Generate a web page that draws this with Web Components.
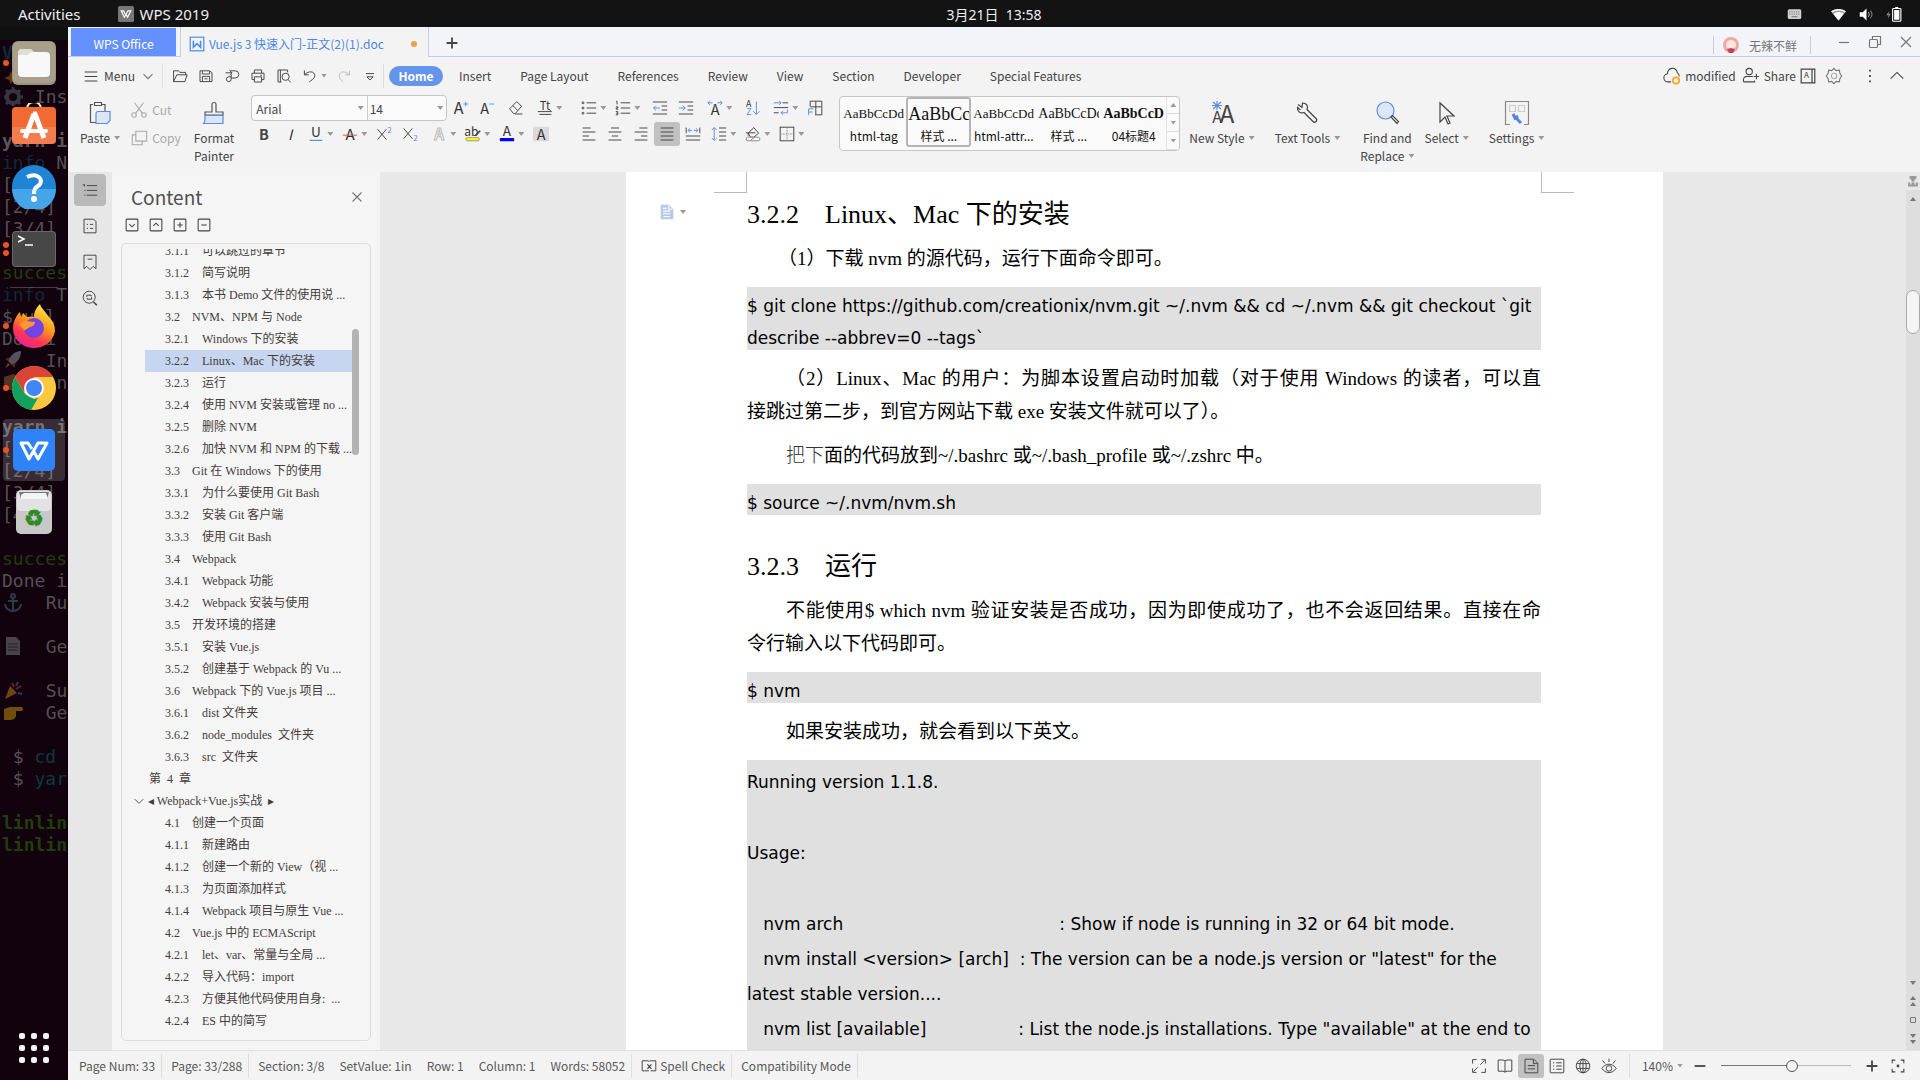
<!DOCTYPE html>
<html lang="en">
<head>
<meta charset="utf-8">
<title>WPS 2019</title>
<style>
html, body { margin: 0; height: 100%; }
body {
  font-family: "Noto Sans CJK SC", "Noto Sans", sans-serif;
  font-size: 12px;
  color: #444;
  overflow: hidden;
}
</style>
</head>
<body>
<desktop-shell></desktop-shell>
<script>
const A = (x, y, size, fill = "#333", extra = "") =>
  `<text x="${x}" y="${y}" font-size="${size}" fill="${fill}" stroke="none" text-anchor="middle" ${extra}>A</text>`;

// every icon sits on a 20 x 20 grid unless the box says otherwise
const icons = {
  menu: `<path d="M3 5.500h14M3 10.500h14M3 15.500h14"/>`,
  chevron: `<path stroke="#777" d="M5 8l5 5 5-5"/>`,
  fold: `<path stroke-width="1.500" d="M3 7l7 7 7-7"/>`,
  up: `<path d="M3 13l7-7 7 7"/>`,
  open: `<path d="M2 17V3.500h6l2 2h7v3M2 17l4-8.500h13L16 17z"/>`,
  save: `<path d="M2.500 3.500h12l3 2.500v11h-15zM5.500 4v3.500h9V4M5.500 17v-6.500h9V17M8 13.500h4"/>`,
  pdf: `<path d="M8 3.500h6a4.500 4.500 0 0 1 0 9H9M9 8v6a3 3 0 1 1-3-3h3M2 6h8M7 3l3 3-3 3"/>`,
  print: `<path d="M5.500 6.500v-4h9v4M5.500 14.500h-3v-8h15v8h-3M5.500 11h9v6.500h-9zM13 9h2"/>`,
  preview: `<path d="M7 17.500H2.500v-15h12v3M5.500 2.500v15"/><circle cx="12" cy="11" r="4.500"/><path d="M15 14.500l3.500 3.500"/>`,
  undo: `<path d="M3 3v5.500h5.500M3 8.500C8 3 16 4 16 9.500c0 4-5 6-7 8"/>`,
  redo: `<path stroke="#bbb" d="M17 3v5.500h-5.500M17 8.500C12 3 4 4 4 9.500c0 4 3 6 5 8"/>`,
  more: `<path d="M5 7h10M6 11h8l-4 4z"/>`,
  ruler: `<path fill="#999" stroke="none" d="M5 3h10v3l-3 3v2H8V9L5 6zM3 12h3v3h2v-3h4v3h2v-3h3v6H3z"/>`,
  scissors: `<path stroke="#aaa" d="M5 2l9 12M15 2L6 14"/><circle stroke="#aaa" cx="4.500" cy="15.500" r="2.500"/><circle stroke="#aaa" cx="15.500" cy="15.500" r="2.500"/>`,
  copy: `<path stroke="#aaa" d="M6.500 2.500h12v11h-12zM6 6.500H2.500v11h11V14"/>`,
  grow: A(7, 18, 20) + `<path stroke="#5a8fe0" d="M13 5h6M16 2v6"/>`,
  shrink: A(7, 18, 18) + `<path stroke="#5a8fe0" d="M13 5h6"/>`,
  eraser: `<path d="M2 11l9-9 6 6-8 9H7zM6 7l6 6M9 17.500h9"/>`,
  tt: `<text x="10" y="12" font-size="14" fill="#333" stroke="none" text-anchor="middle">Tt</text><path d="M1 14.500h17l-2-2M18 18H3"/>`,
  bullets: `<path d="M7 3.500h12M7 10h12M7 16.500h12"/><circle cx="2.500" cy="3.500" r="1.200"/><circle cx="2.500" cy="10" r="1.200"/><circle cx="2.500" cy="16.500" r="1.200"/>`,
  numbers: `<path d="M7 3.500h12M7 10h12M7 16.500h12M1.500 1.500h1V5.500M1 8.500h2.500v1.500H1.500v1.500h2.500M1 14.500h2.500v4H1M1.500 16.500h2"/>`,
  outdent: `<path d="M1 2.500h18M12 7.500h7M12 12.500h7M1 17.500h18"/><path stroke="#5a8fe0" d="M10 10H2l3-3M2 10l3 3"/>`,
  indent: `<path d="M1 2.500h18M12 7.500h7M12 12.500h7M1 17.500h18"/><path stroke="#5a8fe0" d="M1 10h8L6 7M9 10l-3 3"/>`,
  scale: A(10, 19, 18) + `<path stroke="#5a8fe0" d="M7 3.500H1l2.500-2.500M1 3.500L3.500 6M13 3.500h6L16.500 1M19 3.500L16.500 6"/>`,
  sort: A(6, 9, 11) + `<text x="6" y="19" font-size="11" fill="#5a8fe0" stroke="none" text-anchor="middle">Z</text><path stroke="#5a8fe0" d="M15.500 2v16l-4-4M15.500 18l4-4"/>`,
  wrap: `<path d="M12 3.500h7M1 9.500h18M1 16h6"/><path stroke="#5a8fe0" d="M1 3.500h9L7.500 1M10 3.500L7.500 6M18 12v4h-8l2.500-2.500M10 16l2.500 2.500"/>`,
  frame: `<path d="M4 8V1.500h14.500v17H10M11 2v16M4 8.500h14"/><path stroke="#5a8fe0" d="M2 19v-8h6M2 15h5"/>`,
  bold: `<text x="10" y="17" font-size="18" font-weight="bold" fill="#444" stroke="none" text-anchor="middle">B</text>`,
  italic: `<text x="10" y="17" font-size="18" font-style="italic" fill="#333" stroke="none" text-anchor="middle">I</text>`,
  underline: `<text x="10" y="14" font-size="17" fill="#333" stroke="none" text-anchor="middle">U</text><path stroke="#5a8fe0" stroke-width="1.500" d="M2 18h16"/>`,
  strike: A(10, 17, 19) + `<path stroke="#d9534f" d="M1 11.500h18"/>`,
  sup: `<path d="M2 4l11 13M13 4L2 17"/><text x="17" y="9" font-size="10" fill="#5a8fe0" stroke="none" text-anchor="middle">2</text>`,
  sub: `<path d="M2 3l11 13M13 3L2 16"/><text x="17" y="19" font-size="10" fill="#5a8fe0" stroke="none" text-anchor="middle">2</text>`,
  outlineA: `<text x="10" y="17" font-size="19" fill="#f3f3f3" stroke="#bbb" text-anchor="middle" font-weight="bold">A</text>`,
  highlight: `<text x="8" y="12" font-size="15" fill="#333" stroke="none" text-anchor="middle">ab</text><path d="M13 12l6-6" stroke-width="2"/><rect x="1" y="14.500" width="17" height="4" rx="2" fill="#ff0" stroke="#999"/>`,
  fontcolor: A(10, 13, 17) + `<rect x="1" y="15" width="18" height="4" rx="1" fill="#00f" stroke="none"/>`,
  shade: `<rect y="1" width="20" height="18" rx="1" fill="#dadada" stroke="none"/>` + A(10, 17, 18),
  left: `<path d="M2 2.500h10M2 7.500h16M2 12.500h8M2 17.500h16"/>`,
  center: `<path d="M5 2.500h10M2 7.500h16M6 12.500h8M2 17.500h16"/>`,
  right: `<path d="M8 2.500h10M2 7.500h16M10 12.500h8M2 17.500h16"/>`,
  justify: `<path d="M2 2.500h16M2 7.500h16M2 12.500h16M2 17.500h16"/>`,
  distribute: `<path d="M1.500 2v7M18.500 2v7M1 12.500h18M1 17.500h18"/><path stroke="#5a8fe0" d="M9 5.500H4l2-2.500M4 5.500L6 8M11 5.500h5L14 3M16 5.500L14 8"/>`,
  spacing: `<path d="M10 2.500h9M10 7.500h9M10 12.500h9M10 17.500h9"/><path stroke="#5a8fe0" d="M4 2v16M1 5l3-3 3 3M1 15l3 3 3-3"/>`,
  bucket: `<path d="M4 9l7-7 6 7-6 5H7zM1 8.500h12M4 9v3"/><rect x="1.500" y="14" width="17" height="4.500" rx="2" fill="#fff" stroke="#888"/><path stroke="#d9534f" d="M7 18l5-4"/>`,
  border: `<rect x="1.500" y="1.500" width="17" height="17"/><path stroke="#999" stroke-dasharray="2 1" d="M10 2v16M2 10h16"/>`,
  list: `<path d="M6 4.500h13M6 10.500h13M6 16.500h13M1 3.500h2.500M3 3.500v2M3 10.500h1.500M3 16.500h1.500"/>`,
  sheet: `<path d="M2.500 1.500h12l3 3v14h-15zM10 8h4M6 8h1.500M6 13h1.500M10 13h4"/>`,
  bookmark: `<path d="M2.500 18.500v-17h15v17l-3.500-3-4 4-4-4zM7 6.500h6"/>`,
  find: `<circle cx="9" cy="9" r="7.500"/><path stroke-width="2" d="M14.500 15l4 4"/><path d="M6 9V6.500h5.500V8M12 9v2.500H6.500V10"/>`,
  boxdown: `<rect x="3.500" y="3.500" width="13" height="13" rx="1"/><path d="M7 9l3 3 3-3"/>`,
  boxup: `<rect x="3.500" y="3.500" width="13" height="13" rx="1"/><path d="M7 11l3-3 3 3"/>`,
  boxplus: `<rect x="3.500" y="3.500" width="13" height="13" rx="1"/><path d="M7 10h6M10 7v6"/>`,
  boxminus: `<rect x="3.500" y="3.500" width="13" height="13" rx="1"/><path d="M7 10h6"/>`,
  close: `<path stroke="#777" d="M5 5l10 10M15 5L5 15"/>`,
  minimize: `<path stroke="#777" d="M5 10.500h10"/>`,
  restore: `<g stroke="#777"><rect x="4.500" y="7.500" width="8" height="8" rx="1"/><path d="M7.500 7V4.500h8v8H13"/></g>`,
  plus: `<path stroke-width="2" d="M10 4v12M4 10h12"/>`,
  minus: `<path stroke-width="2" d="M4 10h12"/>`,
  cloud: `<path d="M9 16.500H6a4.500 4.500 0 0 1-1-9 5.500 5.500 0 0 1 11-1 4.500 4.500 0 0 1 2 4"/><circle cx="14.500" cy="15" r="3.500" stroke="#f5a623" stroke-width="2"/>`,
  share: `<circle cx="8" cy="5" r="3.500"/><path d="M12 10.500H6a4 4 0 0 0-4 6h12V15M13 10.500h6M16 7.500v6"/>`,
  ai: `<path stroke-width="1.500" d="M1.500 1.500h17v17h-17zM15 2v16"/>` + A(8, 13, 10),
  gear: `<path stroke="#777" d="M10 1.500l2.500 2.500 3.500-.5.500 3.500 2 3-2 3-.5 3.500-3.500-.5-2.500 2.500L7.500 16l-3.500.5L3.500 13l-2-3 2-3L4 3.500l3.500.5z"/><circle cx="10" cy="10" r="3" stroke="#aaa"/>`,
  dots: `<path stroke-width="2" d="M10 3v2M10 9v2M10 15v2"/>`,
  full: `<path d="M7 2H2v5M13 2h5v5M2 13v5h5M18 13v5h-5M11.500 8.500L17 3M8.500 11.500L3 17"/>`,
  book: `<path d="M10 4v14M1.500 2.500h6l2.500 1 2.500-1h6v14h-6l-2.500 1-2.500-1h-6z"/>`,
  page: `<path d="M2.500 1.500h11l5 5v12h-16zM6 9.500h9M6 13.500h9M13 2v5h5"/>`,
  outline: `<rect x="1.500" y="1.500" width="17" height="17" rx="1"/><path d="M5 6h1.500M9 6h7M5 10h1.500M9 10h7M5 14h1.500M9 14h7"/>`,
  globe: `<circle cx="10" cy="10" r="8.500"/><ellipse cx="10" cy="10" rx="4" ry="8.500"/><path d="M10 2v16M2.500 7h15M2.500 13h15"/>`,
  eye: `<path d="M1 13c5-7 13-7 18 0-5 7-13 7-18 0zM10 1v4M2 3l3 4M18 3l-3 4"/><circle cx="10" cy="13" r="3.500"/>`,
  spell: `<path d="M10 16H1.500V3.500H9l1 1 1-1h7.500V16H12"/><path stroke-width="1.500" d="M8 8l5 5.500M13 8l-5 5.500"/>`,
  fit: `<path d="M7 3.500H3.500V7M13 3.500h3.500V7M3.500 13v3.500H7M16.500 13v3.500H13"/><circle cx="10" cy="10" r="1" fill="#444"/>`,
  docmark: `<path fill="#b7c9ea" stroke="none" d="M3 2h9l5 5v11H3z"/><path stroke="#fff" d="M5.500 6h4M5.500 9h8M5.500 12h8M6 15h7M12 3v4h4"/>`,
  wlogo: `<rect x="1.500" y="1.500" width="17" height="17" fill="none" stroke="#4a8df0" stroke-width="1.500"/><path stroke="#4a8df0" stroke-width="2" d="M5.500 6v8l4.500-4.500 4.500 4.500V6"/>`,
  wgrey: `<rect width="20" height="20" rx="2" fill="#777" stroke="none"/><path stroke="#fff" stroke-width="1.500" d="M9 10L7 6H4l4 8 4.500-8H16l-4 8-2-4"/>`,
  keyboard: `<rect x="1" y="3" width="18" height="13" rx="2" fill="#d0d0d0" stroke="none"/><path stroke="#666" stroke-dasharray="1.500 1.500" d="M3 6.500h14M3 9.500h14"/><path stroke="#666" d="M6 13h8"/>`,
  wifi: `<path fill="#999" stroke="none" d="M10 18L0 6c6-4.500 14-4.500 20 0z"/><path fill="#fff" stroke="none" d="M10 18L3 9c4-3 10-3 14 0z"/><path stroke="#fff" stroke-width="2" d="M1 6.500c5-4 13-4 18 0"/>`,
  sound: `<path fill="#fff" stroke="none" d="M1 7h4l5-5v16l-5-5H1z"/><path stroke="#ddd" d="M12.500 7c1.500 2 1.500 4 0 6"/><path stroke="#777" stroke-width="1.500" d="M15 5c3 3 3 7 0 10"/>`,
  battery: `<path fill="#888" stroke="none" d="M3 5L-1 11h3l-1 5 4-7H2z"/><rect x="7.500" y="2" width="11" height="17" rx="1" stroke="#fff" stroke-width="1.500"/><path fill="#fff" stroke="none" d="M11 0h4v2h-4zM9.500 4h7v13h-7z"/>`,
  paste: `<path stroke="#555" d="M5 3.500H2.500v18H9M14 3.500h3V10"/><path stroke="#555" d="M6.500 1.500h7v3h-7z"/><path fill="#dde6f7" stroke="#5a8fe0" d="M8 12.500q0-2 2-2h12v9l-3 3H8z"/>`,
  painter: `<path stroke="#555" d="M10 11V3q0-1.500 2-1.500t2 1.500v8h7v3H3v-3z"/><path fill="#dde6f7" stroke="#5a8fe0" d="M3 14.500h18v8H1.500q1.500-2 1.500-4z"/>`,
  newstyle: `<text x="7" y="22" font-size="16" fill="#444" stroke="none" text-anchor="middle">A</text><text x="17" y="22" font-size="24" fill="#444" stroke="none" text-anchor="middle">A</text><path stroke="#5a8fe0" d="M7 0v9M3 1l8 7M11 1L3 8M2 4.500h10"/>`,
  wrench: `<path d="M3 3.500l4 3 .5-4.500c4 0 6 3 4.500 6.500l9 9c2 2-1 5-3 3l-9-9C5 13 2 10 2.500 6.500l3 2.500"/>`,
  magnify: `<circle cx="10.500" cy="9.500" r="8.500" fill="#dde6f7" stroke="#5a8fe0"/><path d="M16 16l1.500-1.500 6 6-1.500 2z"/>`,
  cursor: `<path d="M5 2v19l5-5 3 7 2-1-3-7h7z"/>`,
  settings: `<path stroke="#888" d="M5 23.500H.5V.5h23v23H19"/><path stroke="#ccc" d="M4.500 4.500h6v6h-6zM13.500 4.500h6v6h-6z"/><path stroke="#4f87dd" stroke-width="3" d="M10 16l6 6M8 13l2 4 3-2"/>`
};

function define(tag, html, setup) {
  const template = document.createElement("template");
  template.innerHTML = html;
  customElements.define(tag, class extends HTMLElement {
    constructor() {
      super();
      this.attachShadow({ mode: "open" });
      this.shadowRoot.append(template.content.cloneNode(true));
    }
    connectedCallback() {
      if (setup) setup(this, this.shadowRoot);
    }
  });
}

const reset = `
  :host, *{ box-sizing: border-box; }
  button{ font: inherit; color: inherit; background: none; border: 0; padding: 0; }
  a{ color: inherit; text-decoration: none; }
`;

define("wps-icon", `
<style>
:host{ display: block; flex: none; width: 18px; height: 18px; }
svg{ display: block; width: 100%; height: 100%; overflow: visible; }
</style>
<svg fill="none" stroke="#444" stroke-width="1.200" aria-hidden="true"></svg>`, (el, root) => {
  const svg = root.querySelector("svg");
  svg.setAttribute("viewBox", `0 0 ${el.getAttribute("grid") || "20 20"}`);
  svg.innerHTML = icons[el.getAttribute("name")];
});

define("drop-caret", `
<style>
:host{ display: block; flex: none; width: 6px; height: 4px; background: #999; clip-path: polygon(0 0, 100% 0, 50% 100%); }
:host([up]){ clip-path: polygon(50% 0, 100% 100%, 0 100%); }
</style>`);

// small toolbar button, with an optional drop-down arrow
define("tool-button", `
<style>${reset}
:host{ display: block; flex: none; width: 26px; }
:host([caret]){ width: 34px; }
:host([apart]){ margin-left: 3px; }
button{ display: flex; align-items: center; gap: 3px; width: 26px; height: 24px; padding-left: 5px; border-radius: 3px; }
:host([on]) button{ background: #c1c1c1; }
wps-icon{ width: 16px; height: 16px; }
drop-caret{ display: none; }
:host([caret]) drop-caret{ display: block; }
</style>
<button type="button"><wps-icon></wps-icon><drop-caret></drop-caret></button>`, (el, root) => {
  root.querySelector("button").setAttribute("aria-label", el.getAttribute("icon"));
  const icon = document.createElement("wps-icon");
  icon.setAttribute("name", el.getAttribute("icon"));
  root.querySelector("wps-icon").replaceWith(icon);
});

// large ribbon button: picture above, caption below
define("big-tool", `
<style>${reset}
:host{ display: block; flex: none; }
button{ display: flex; flex-direction: column; align-items: center; gap: 4px; line-height: 18px; white-space: nowrap; }
::slotted(wps-icon){ width: 24px; height: 24px; }
drop-caret{ display: inline-block; margin-left: 4px; vertical-align: 3px; }
:host([plain]) drop-caret{ display: none; }
</style>
<button type="button"><slot name="icon"></slot><span><slot></slot><drop-caret></drop-caret></span></button>`);

define("top-bar", `
<style>
:host{
  display: grid;
  grid-template-columns: 1fr auto 1fr;
  align-items: center;
  height: 27px;
  padding: 0 18px;
  background: #131313;
  color: #eee;
  font: 15px/26px "Noto Sans", "Noto Sans CJK SC", sans-serif;
}
div{ display: flex; align-items: center; }
.left{ gap: 37px; }
.app{ gap: 6px; }
.clock{ padding: 2px 0 0 68px; font-size: 14px; }
.right{ justify-content: flex-end; gap: 13px; }
wps-icon{ width: 15px; height: 15px; }
.keys{ margin-right: 16px; }
.app wps-icon{ width: 16px; height: 16px; }
</style>
<div class="left"><span>Activities</span><div class="app"><wps-icon name="wgrey"></wps-icon><span>WPS 2019</span></div></div>
<div class="clock">3月21日&nbsp; 13:58</div>
<div class="right"><wps-icon class="keys" name="keyboard"></wps-icon><wps-icon name="wifi"></wps-icon><wps-icon name="sound"></wps-icon><wps-icon name="battery"></wps-icon></div>`);

// the console window that shows through the translucent dock
define("term-backdrop", `
<style>
:host{ display: block; overflow: hidden; background: #12020d; border-top: 13px solid #101010; }
pre{ margin: 0; padding: 2px 0 0 2px; font: 18px/22px "DejaVu Sans Mono", monospace; color: #555053; }
.info{ color: #10293a; }
.ok{ color: #203f0b; }
.cmd{ color: #0b3b40; }
b{ color: #5c575a; }
svg{ display: inline-block; width: 22px; height: 20px; vertical-align: top; opacity: .45; }
</style>
<pre><b class="info">V  L</b>
<svg viewBox="0 0 20 20"><path fill="#b07c10" d="M8 7l2 5 5 2-5 2-2 4-2-4-5-2 5-2z"/></svg>  r
<svg viewBox="0 0 20 20"><circle cx="10" cy="11" r="6" fill="none" stroke="#5f7885" stroke-width="4"/><path stroke="#5f7885" stroke-width="3" d="M10 1v4M10 17v3M1 11h3M16 11h4M3 4l3 3M14 15l3 3M17 4l-3 3M6 15l-3 3"/></svg> Ins

<b>yarn i</b>
<span class="info">info</span> N
[
[2/4]
[3/4]

<span class="ok">succes</span>
<span class="info">info</span> T
$ url
Do  i
<svg viewBox="0 0 20 20"><path fill="#a9b3ba" d="M18 1c-6 0-10 4-13 10l4 4c6-3 9-8 9-14z"/><path fill="#d03b2f" d="M7 7L2 9l3 2zM13 13l-2 5-2-3z"/><path fill="#f0922b" d="M5 13l-3 5 5-3z"/></svg>  In
<svg viewBox="0 0 20 20"><path fill="#a5713d" d="M1 5l9-3 9 3v11l-9 3-9-3z"/></svg>   n

<b>yarn i</b>
[
[2/4]
[3/4]
[4

<span class="ok">succes</span>
Done i
<svg viewBox="0 0 20 20"><g fill="none" stroke="#4b8599" stroke-width="2"><circle cx="10" cy="4" r="2"/><path d="M10 6v13M5 9h10M2 12c0 4 4 7 8 7s8-3 8-7"/></g></svg>  Ru

<svg viewBox="0 0 20 20"><path fill="#8a9296" d="M3 1h10l4 4v14H3z"/><path stroke="#444" d="M5 8h10M5 11h10M5 14h10"/></svg>  Ge

<svg viewBox="0 0 20 20"><path fill="#d99a25" d="M2 19L7 6l7 7z"/><path stroke="#d8434e" stroke-width="2" d="M9 3l2 4M13 9l5-3"/><path stroke="#3880cc" stroke-width="2" d="M15 2l-2 4M15 13l4 1"/></svg>  Su
<svg viewBox="0 0 20 20"><path fill="#e3a90b" d="M1 7l6-2h12q2 2 0 4h-6v5q-1 4-6 4H1z"/></svg>  Ge

 $ <span class="cmd">cd</span>
 $ <span class="cmd">yar</span>

<b class="ok">linlin</b>
<b class="ok">linlin</b></pre>`);

define("app-dock", `
<style>${reset}
:host{ display: flex; flex-direction: column; padding: 5px 0 17px; }
button{ display: flex; align-items: center; height: 62px; width: 68px; padding-left: 3px; gap: 3px; }
.run{ flex: none; display: flex; flex-direction: column; gap: 2px; width: 6px; }
.run i{ width: 6px; height: 6px; border-radius: 50%; background: #e95420; }
svg{ display: block; width: 44px; height: 44px; }
.active{ width: 62px; margin-left: 3px; padding-left: 0; border-radius: 4px; background: #ffffff2b; }
hr{ width: 48px; margin: 7px 0 7px 10px; border: 0; border-top: 1px solid #ffffff3a; }
.apps{ margin-top: auto; height: 30px; padding-left: 19px; }
.apps svg{ width: 30px; height: 30px; }
</style>
<button type="button" aria-label="Files"><span class="run"><i></i></span><svg viewBox="0 0 44 44"><rect width="44" height="44" rx="6" fill="#9c947f"/><rect x="1" y="1" width="42" height="41" rx="5" fill="#a8a08d"/><path fill="#e0ddd3" d="M6 12q0-4 4-4h8l4 4v6H6z"/><rect x="6" y="11" width="32" height="25" rx="4" fill="#f8f8f8"/><path fill="#e0ddd3" d="M6 14q0-6 4-6h8q2 0 3 2l1 1q-4 0-6 3z"/></svg></button>
<button type="button" aria-label="Software"><span class="run"></span><svg viewBox="0 0 44 44"><path d="M15 7q0-8 7-8t7 8" fill="none" stroke="#f2e3c8" stroke-width="2"/><rect y="4" width="44" height="37" rx="4" fill="#f26a33"/><path fill="#ffffff22" d="M0 24h44v13q0 4-4 4H4q-4 0-4-4z"/><path fill="none" stroke="#fff" stroke-width="5" d="M21 11h2l9 24M22 11l-9 24"/><path stroke="#fff" stroke-width="4" stroke-linecap="round" d="M10 28h24"/></svg></button>
<button type="button" aria-label="Help"><span class="run"></span><svg viewBox="0 0 44 44"><circle cx="22" cy="22" r="22" fill="#1f84d6"/><path fill="#45a5e8" d="M0 24h44a22 22 0 0 1-44 0z"/><path fill="none" stroke="#fff" stroke-width="4" d="M15 12q6-3 10-1c6 3 4 8 1 10-3 2-4 3-4 8"/><circle cx="22" cy="34" r="3" fill="#fff"/></svg></button>
<button type="button" aria-label="Terminal"><span class="run"><i></i><i></i></span><svg viewBox="0 0 44 44"><rect y="4" width="44" height="36" rx="4" fill="#6a6a6a"/><rect x="1" y="5" width="42" height="34" rx="3" fill="#474747"/><path fill="none" stroke="#fff" stroke-width="1.500" d="M6 9l6 3-6 3M13 18h8"/></svg></button>
<hr>
<button type="button" aria-label="Firefox"><span class="run"><i></i></span><svg viewBox="0 0 44 44"><defs><linearGradient id="fox" x1=".8" y1="0" x2=".3" y2="1"><stop stop-color="#fff04a"/><stop offset=".45" stop-color="#ff9a1f"/><stop offset=".75" stop-color="#ff3750"/><stop offset="1" stop-color="#e3209a"/></linearGradient></defs><path fill="url(#fox)" d="M28 0c1 4 5 7 9 13q6 6 6 14c-2 11-11 17-21 17C10 44 1 35 1 24c0-6 3-12 7-16l1 5 2-4 4 4q5-1 7 0c0-6 3-10 6-13z"/><circle cx="22" cy="24" r="10" fill="#7542e5"/><path fill="#ff9a2a" d="M7 20l7-3 9 1q0 4-5 5c-3 1-3 3-6 3z"/></svg></button>
<button type="button" aria-label="Chrome"><span class="run"><i></i></span><svg viewBox="0 0 44 44"><circle cx="22" cy="22" r="22" fill="#fbc941"/><path fill="#db4437" d="M3 11a22 22 0 0 1 38 0H22L12 26z"/><path fill="#12a05c" d="M3 11l10 17 9 5 4-1-7 12A22 22 0 0 1 3 11z"/><circle cx="22" cy="22" r="10" fill="#fff"/><circle cx="22" cy="22" r="8" fill="#4285f4"/></svg></button>
<button type="button" class="active" aria-label="WPS"><span class="run"><i></i></span><svg viewBox="0 0 44 44"><rect x="1" y="1" width="42" height="42" rx="5" fill="#2d83f7"/><path fill="none" stroke="#fff" stroke-width="3" stroke-linejoin="round" d="M20 21l-4-6H9l8 16 9-16h9l-9 16-5-9"/></svg></button>
<button type="button" aria-label="Trash"><span class="run"></span><svg viewBox="0 0 44 44"><rect x="4" width="36" height="44" rx="5" fill="#c8c8c8"/><rect x="5" y="1" width="34" height="20" rx="4" fill="#e2e2e2"/><path fill="#777" d="M7 2h30l-2 7H9z"/><path fill="#f4f4f4" d="M9 5l3-2h22l2 6H9z"/><text x="22" y="36" font-family="DejaVu Sans" font-size="22" fill="#2d8a25" stroke="#2d8a25" text-anchor="middle">♻</text></svg></button>
<button type="button" class="apps" aria-label="Show Applications"><svg viewBox="0 0 30 30" fill="#f2f2f2"><rect width="6" height="6" rx="2"/><rect x="12" width="6" height="6" rx="2"/><rect x="24" width="6" height="6" rx="2"/><rect y="12" width="6" height="6" rx="2"/><rect x="12" y="12" width="6" height="6" rx="2"/><rect x="24" y="12" width="6" height="6" rx="2"/><rect y="24" width="6" height="6" rx="2"/><rect x="12" y="24" width="6" height="6" rx="2"/><rect x="24" y="24" width="6" height="6" rx="2"/></svg></button>`);

define("tab-strip", `
<style>${reset}
:host{ display: flex; align-items: stretch; height: 30px; padding-left: 3px; background: #f2f4f9; box-shadow: inset 0 -1px #c8cee2; }
.home{ width: 105px; margin: 1px 4px 1px 0; padding-top: 3px; background: #6491fe; color: #fff; }
.doc{ display: flex; align-items: center; width: 249px; padding: 3px 11px 0 8px; border: solid #c8cee2; border-width: 0 1px; background: #f3f3f3; color: #4a86e8; white-space: nowrap; }
.doc wps-icon{ width: 16px; height: 16px; margin-right: 4px; }
.dot{ width: 6px; height: 6px; margin-left: auto; border-radius: 50%; background: #e9a04b; }
.add{ padding: 2px 14px 0; }
.user{ display: flex; align-items: center; gap: 10px; height: 18px; margin: 9px 23px 0 auto; padding: 0 13px 0 9px; border: solid #ccc; border-width: 0 1px; color: #777; }
.user svg{ width: 16px; height: 16px; }
.win{ display: flex; align-items: center; gap: 11px; padding: 0 4px 0 0; }
.win wps-icon{ width: 20px; height: 20px; }
</style>
<button type="button" class="home">WPS Office</button>
<div class="doc"><wps-icon name="wlogo"></wps-icon><span>Vue.js 3 快速入门-正文(2)(1).doc</span><span class="dot"></span></div>
<button type="button" class="add" aria-label="New tab"><wps-icon name="plus"></wps-icon></button>
<div class="user"><svg viewBox="0 0 16 16"><circle cx="8" cy="8" r="8" fill="#efa9a0"/><circle cx="8" cy="8" r="5" fill="#fbe6e0"/><path fill="#c2425c" d="M4 12l4-1 4 1-2 4H6z"/></svg><span>无辣不鲜</span></div>
<div class="win"><button type="button" aria-label="Minimize"><wps-icon name="minimize"></wps-icon></button><button type="button" aria-label="Restore"><wps-icon name="restore"></wps-icon></button><button type="button" aria-label="Close"><wps-icon name="close"></wps-icon></button></div>`);

define("menu-row", `
<style>${reset}
:host{ display: flex; align-items: center; height: 38px; padding: 0 14px 1px; }
.menu{ display: flex; align-items: center; gap: 4px; padding-right: 5px; }
.quick{ display: flex; align-items: center; height: 24px; padding: 0 0 0 4px; border: solid #ddd; border-width: 0 1px; }
.home{ width: 54px; height: 20px; margin: 0 16px 0 5px; border-radius: 10px; background: #6595ea; color: #fff; font-weight: bold; line-height: 20px; }
nav{ display: flex; gap: 29px; }
.right{ display: flex; align-items: center; gap: 4px; margin-left: auto; }
.right .share{ margin-left: 2px; }
.right .ai{ width: 16px; height: 16px; }
.right .gear{ margin-left: 5px; }
.right .dots{ margin: 0 5px 0 14px; }
</style>
<button type="button" class="menu"><wps-icon name="menu"></wps-icon><span>Menu</span><wps-icon name="chevron"></wps-icon></button>
<div class="quick">
  <tool-button icon="open"></tool-button><tool-button icon="save"></tool-button><tool-button icon="pdf"></tool-button><tool-button icon="print"></tool-button><tool-button icon="preview"></tool-button><tool-button icon="undo" caret></tool-button><tool-button icon="redo"></tool-button><tool-button icon="more"></tool-button>
</div>
<button type="button" class="home">Home</button>
<nav><a href="#">Insert</a><a href="#">Page Layout</a><a href="#">References</a><a href="#">Review</a><a href="#">View</a><a href="#">Section</a><a href="#">Developer</a><a href="#">Special Features</a></nav>
<div class="right"><wps-icon name="cloud"></wps-icon><span>modified</span><wps-icon class="share" name="share"></wps-icon><span>Share</span><wps-icon class="ai" name="ai"></wps-icon><wps-icon class="gear" name="gear"></wps-icon><wps-icon class="dots" name="dots"></wps-icon><wps-icon name="up"></wps-icon></div>`);

define("style-card", `
<style>
:host{ display: block; width: 65px; height: 50px; padding: 0 2px; overflow: hidden; box-sizing: border-box; color: #111; white-space: nowrap; border: 2px solid transparent; border-width: 2px 0; }
:host([on]){ border: 2px solid #b5b5b5; border-radius: 3px; padding: 0; }
.sample{ height: 28px; overflow: hidden; font: var(--sample, 13px)/30px "Liberation Serif", serif; }
:host([heavy]) .sample{ font-weight: bold; }
.name{ line-height: 18px; text-align: center; }
</style>
<div class="sample">AaBbCcDd</div><div class="name"><slot></slot></div>`);

define("wps-ribbon", `
<style>${reset}
:host{ display: flex; align-items: flex-start; height: 77px; padding: 0 12px; }
.clip{ display: grid; gap: 10px; padding: 6px 13px 0 10px; color: #aaa; }
.clip button{ display: flex; align-items: center; gap: 4px; line-height: 18px; }
.fonts{ padding-left: 17px; }
.row{ display: flex; align-items: center; height: 26px; }
.combo{ display: flex; align-items: center; width: 196px; height: 26px; border: 1px solid #c6c6c6; border-radius: 4px; background: #fafafa; margin-right: 1px; }
.combo select{ appearance: none; border: 0; background: none; font: inherit; color: inherit; width: 115px; padding: 0 4px; height: 24px; }
.combo .size{ width: 80px; border-left: 1px solid #ccc; padding-left: 2px; }
.combo drop-caret{ margin: 0 3px 0 -9px; }
.paras{ padding-left: 10px; }
.gallery{ display: flex; height: 55px; margin: 1px 9px 0 11px; padding-left: 1px; border: 1px solid #c6c6c6; border-radius: 4px; background: #fafafa; }
.pager{ display: grid; grid-template-rows: 17px 18px 18px; width: 13px; border-left: 1px solid #e4e4e4; place-items: center; }
.pager button{ display: grid; place-items: center; width: 12px; height: 100%; border-bottom: 1px solid #ddd; }
.big{ margin-top: 6px; }
.tools{ display: flex; align-items: flex-start; gap: 20px; padding-top: 6px; }
.near{ margin-left: -10px; }
</style>
<big-tool class="big"><wps-icon slot="icon" name="paste" grid="24 24"></wps-icon>Paste</big-tool>
<div class="clip"><button type="button"><wps-icon name="scissors"></wps-icon>Cut</button><button type="button"><wps-icon name="copy"></wps-icon>Copy</button></div>
<big-tool class="big" plain><wps-icon slot="icon" name="painter" grid="24 24"></wps-icon>Format<br>Painter</big-tool>
<div class="fonts">
  <div class="row">
    <div class="combo"><select aria-label="Font"><option>Arial</option></select><drop-caret></drop-caret><select class="size" aria-label="Font size"><option>14</option></select><drop-caret></drop-caret></div>
    <tool-button icon="grow"></tool-button><tool-button icon="shrink"></tool-button><tool-button icon="eraser" apart></tool-button><tool-button icon="tt" caret apart></tool-button>
  </div>
  <div class="row">
    <tool-button icon="bold"></tool-button><tool-button icon="italic"></tool-button><tool-button icon="underline" caret></tool-button><tool-button icon="strike" caret></tool-button><tool-button icon="sup"></tool-button><tool-button icon="sub"></tool-button><tool-button icon="outlineA" caret apart></tool-button><tool-button icon="highlight" caret></tool-button><tool-button icon="fontcolor" caret></tool-button><tool-button icon="shade"></tool-button>
  </div>
</div>
<div class="paras">
  <div class="row">
    <tool-button icon="bullets" caret></tool-button><tool-button icon="numbers" caret></tool-button><tool-button icon="outdent" apart></tool-button><tool-button icon="indent"></tool-button><tool-button icon="scale" caret apart></tool-button><tool-button icon="sort" apart></tool-button><tool-button icon="wrap" caret apart></tool-button><tool-button icon="frame"></tool-button>
  </div>
  <div class="row">
    <tool-button icon="left"></tool-button><tool-button icon="center"></tool-button><tool-button icon="right"></tool-button><tool-button icon="justify" on></tool-button><tool-button icon="distribute"></tool-button><tool-button icon="spacing" caret></tool-button><tool-button icon="bucket" caret></tool-button><tool-button icon="border" caret></tool-button>
  </div>
</div>
<div class="gallery">
  <style-card>html-tag</style-card><style-card on style="--sample: 18px">样式 ...</style-card><style-card>html-attr...</style-card><style-card style="--sample: 14px">样式 ...</style-card><style-card heavy style="--sample: 14px">04标题4</style-card>
  <div class="pager"><button type="button" aria-label="Previous"><drop-caret up></drop-caret></button><button type="button" aria-label="Next"><drop-caret></drop-caret></button><button type="button" aria-label="More"><drop-caret></drop-caret></button></div>
</div>
<div class="tools">
  <big-tool><wps-icon slot="icon" name="newstyle" grid="24 24"></wps-icon>New Style</big-tool>
  <big-tool><wps-icon slot="icon" name="wrench" grid="24 24"></wps-icon>Text Tools</big-tool>
  <big-tool><wps-icon slot="icon" name="magnify" grid="24 24"></wps-icon>Find and<br>Replace</big-tool>
  <big-tool class="near"><wps-icon slot="icon" name="cursor" grid="24 24"></wps-icon>Select</big-tool>
  <big-tool><wps-icon slot="icon" name="settings" grid="24 24"></wps-icon>Settings</big-tool>
</div>`);

define("side-strip", `
<style>${reset}
:host{ display: flex; flex-direction: column; align-items: center; gap: 4px; flex: none; width: 44px; padding-top: 2px; background: #e7e7e7; }
button{ display: grid; place-items: center; width: 32px; height: 32px; border-radius: 4px; }
wps-icon{ width: 16px; height: 16px; }
.on{ background: #b9b9b9; }
</style>
<button type="button" class="on" aria-label="Contents"><wps-icon name="list"></wps-icon></button>
<button type="button" aria-label="Chapters"><wps-icon name="sheet"></wps-icon></button>
<button type="button" aria-label="Bookmarks"><wps-icon name="bookmark"></wps-icon></button>
<button type="button" aria-label="Search"><wps-icon name="find"></wps-icon></button>`);

const outline = [
  ["3.1.1", "可以跳过的章节"],
  ["3.1.2", "简写说明"],
  ["3.1.3", "本书 Demo 文件的使用说 ..."],
  ["3.2", "NVM、NPM 与 Node"],
  ["3.2.1", "Windows 下的安装"],
  ["3.2.2", "Linux、Mac 下的安装"],
  ["3.2.3", "运行"],
  ["3.2.4", "使用 NVM 安装或管理 no ..."],
  ["3.2.5", "删除 NVM"],
  ["3.2.6", "加快 NVM 和 NPM 的下载 ..."],
  ["3.3", "Git 在 Windows 下的使用"],
  ["3.3.1", "为什么要使用 Git Bash"],
  ["3.3.2", "安装 Git 客户端"],
  ["3.3.3", "使用 Git Bash"],
  ["3.4", "Webpack"],
  ["3.4.1", "Webpack 功能"],
  ["3.4.2", "Webpack 安装与使用"],
  ["3.5", "开发环境的搭建"],
  ["3.5.1", "安装 Vue.js"],
  ["3.5.2", "创建基于 Webpack 的 Vu ..."],
  ["3.6", "Webpack 下的 Vue.js 项目 ..."],
  ["3.6.1", "dist 文件夹"],
  ["3.6.2", "node_modules&nbsp; 文件夹"],
  ["3.6.3", "src&nbsp; 文件夹"],
  ["", "第&nbsp; 4&nbsp; 章"],
  ["open", "◂ Webpack+Vue.js实战&nbsp; ▸"],
  ["4.1", "创建一个页面"],
  ["4.1.1", "新建路由"],
  ["4.1.2", "创建一个新的 View（视 ..."],
  ["4.1.3", "为页面添加样式"],
  ["4.1.4", "Webpack 项目与原生 Vue ..."],
  ["4.2", "Vue.js 中的 ECMAScript"],
  ["4.2.1", "let、var、常量与全局 ..."],
  ["4.2.2", "导入代码：import"],
  ["4.2.3", "方便其他代码使用自身: &nbsp;..."],
  ["4.2.4", "ES 中的简写"]
];

define("outline-panel", `
<style>${reset}
:host{ display: flex; flex-direction: column; flex: none; width: 268px; padding: 10px 9px 9px; background: #f5f5f5; }
header{ display: flex; align-items: center; justify-content: space-between; padding: 0 5px 0 10px; }
h2{ margin: 0; font-size: 19px; font-weight: normal; line-height: 30px; color: #505050; }
.expand{ display: flex; gap: 6px; padding: 4px 2px 9px; }
.box{ flex: 1; display: flex; min-height: 0; border: 1px solid #ddd; border-radius: 5px; padding: 5px 11px 9px; }
ul{ flex: 1; margin: 0; padding: 0; list-style: none; overflow: hidden; font: 12px/22px "Liberation Serif", "Noto Sans CJK SC", serif; color: #443c3a; }
li:first-child{ margin-top: -9px; }
a{ display: flex; height: 22px; margin-left: 12px; padding-left: 20px; white-space: nowrap; }
.num{ width: 37px; }
.short{ width: 27px; }
a.root{ margin-left: 0; padding-left: 16px; }
a.node{ margin-left: 0; padding-left: 0; align-items: center; gap: 3px; }
.node wps-icon{ width: 12px; height: 12px; }
a.here{ background: #c6d5f0; }
.thumb{ flex: none; width: 7px; height: 126px; margin-top: 80px; border-radius: 4px; background: #b3b3b3; }
</style>
<header><h2>Content</h2><button type="button" aria-label="Close"><wps-icon name="close"></wps-icon></button></header>
<div class="expand"><wps-icon name="boxdown"></wps-icon><wps-icon name="boxup"></wps-icon><wps-icon name="boxplus"></wps-icon><wps-icon name="boxminus"></wps-icon></div>
<div class="box"><ul></ul><div class="thumb"></div></div>`, (el, root) => {
  root.querySelector("ul").innerHTML = outline.map(([num, text]) => {
    if (num === "") return `<li><a class="root" href="#">${text}</a></li>`;
    if (num === "open") return `<li><a class="node" href="#"><wps-icon name="fold"></wps-icon>${text}</a></li>`;
    const size = num.length < 5 ? "num short" : "num";
    return `<li><a href="#"${num === "3.2.2" ? ' class="here"' : ""}><span class="${size}">${num}</span>${text}</a></li>`;
  }).join("");
});

define("doc-section", `
<style>
:host{ display: flex; flex-direction: column; gap: 12px; color: #000; font: 19px/33px "Liberation Serif", "Noto Sans CJK SC", serif; }
h3{ margin: 0 0 -5px; font-size: 26px; line-height: 40px; font-weight: normal; white-space: pre; }
</style>
<h3></h3><slot></slot>`, (el, root) => {
  root.querySelector("h3").textContent = el.getAttribute("heading");
});

define("code-block", `
<style>
:host{ display: flow-root; background: #e0e0e0; }
pre{ margin: 3px 0 -4px; font: 17px/32px "DejaVu Sans", sans-serif; }
:host([loose]) pre{ margin-top: 5px; line-height: 35px; }
</style>
<pre><slot></slot></pre>`);

define("doc-canvas", `
<style>${reset}
:host{ flex: 1; display: flex; min-width: 0; overflow: hidden; background: #e8e8e8; }
.view{ flex: 1; display: flex; justify-content: center; padding-left: 3px; overflow: hidden; }
.page{ display: grid; grid-template-columns: 121px 794px 122px; grid-template-rows: 21px auto; height: max-content; background: #fff; }
.corner{ grid-row: 1; width: 33px; border: solid #bbb; border-width: 0 1px 1px 0; }
.tl{ grid-column: 1; justify-self: end; }
.tr{ grid-column: 3; border-width: 0 0 1px 1px; }
.mark{ grid-column: 1; display: flex; align-items: center; gap: 4px; height: 18px; margin: 10px 0 0 32px; }
article{ grid-column: 2; padding-top: 2px; }
doc-section + doc-section{ margin-top: 32px; }
p{ margin: 0; text-indent: 39px; }
.first{ text-indent: 31px; }
.full, .rest{ display: block; }
.full{ text-align: justify; text-align-last: justify; white-space: nowrap; }
.rest{ text-indent: 0; }
.thin{ font-weight: 300; color: #333; }
.blank{ line-height: 36px; }
aside{ flex: none; display: flex; flex-direction: column; align-items: center; width: 14px; background: #dedede; }
aside wps-icon{ width: 14px; height: 18px; background: #e8e8e8; }
aside drop-caret{ margin-top: 7px; background: #777; }
.thumb{ width: 14px; height: 44px; margin-top: 89px; border: 1px solid #aaa; border-radius: 7px; background: #f5f5f5; }
.jump{ display: grid; gap: 2px; justify-items: center; margin-top: auto; padding-bottom: 6px; }
.jump drop-caret{ margin: 0; }
.jump i{ width: 6px; height: 6px; margin: 9px 0; border: 1px solid #777; border-radius: 1px; }
.jump .down{ margin-bottom: 9px; }
</style>
<div class="view"><div class="page">
  <div class="corner tl"></div><div class="corner tr"></div>
  <div class="mark"><wps-icon name="docmark"></wps-icon><drop-caret></drop-caret></div>
  <article>
    <doc-section heading="3.2.2　Linux、Mac 下的安装">
      <p class="first">（1）下载 nvm 的源代码，运行下面命令即可。</p>
      <code-block>$ git clone https://github.com/creationix/nvm.git ~/.nvm &amp;&amp; cd ~/.nvm &amp;&amp; git checkout \`git
describe --abbrev=0 --tags\`</code-block>
      <p><span class="full">（2）Linux、Mac 的用户：为脚本设置启动时加载（对于使用 Windows 的读者，可以直</span><span class="rest">接跳过第二步，到官方网站下载 exe 安装文件就可以了）。</span></p>
      <p style="margin-top: -1px"><span class="thin">把下</span>面的代码放到~/.bashrc 或~/.bash_profile 或~/.zshrc 中。</p>
      <code-block>$ source ~/.nvm/nvm.sh</code-block>
    </doc-section>
    <doc-section heading="3.2.3　运行">
      <p><span class="full">不能使用$ which nvm 验证安装是否成功，因为即使成功了，也不会返回结果。直接在命</span><span class="rest">令行输入以下代码即可。</span></p>
      <code-block>$ nvm</code-block>
      <p>如果安装成功，就会看到以下英文。</p>
      <code-block loose>Running version 1.1.8.
<span class="blank"> </span>
Usage:
<span class="blank"> </span>
   nvm arch                                        : Show if node is running in 32 or 64 bit mode.
   nvm install &lt;version&gt; [arch]  : The version can be a node.js version or "latest" for the
latest stable version....
   nvm list [available]                 : List the node.js installations. Type "available" at the end to
<span class="blank"> </span></code-block>
    </doc-section>
  </article>
</div></div>
<aside><wps-icon name="ruler"></wps-icon><drop-caret up></drop-caret><div class="thumb"></div>
<div class="jump"><drop-caret class="down"></drop-caret><drop-caret up></drop-caret><drop-caret up></drop-caret><i></i><drop-caret></drop-caret><drop-caret></drop-caret></div></aside>`);

define("status-bar", `
<style>${reset}
:host{ display: flex; align-items: center; height: 30px; padding: 0 13px 0 2px; border-top: 1px solid #e0e0e0; background: #f3f3f3; color: #595959; white-space: nowrap; }
.cell{ display: flex; align-items: center; gap: 3px; height: 24px; padding: 0 6px 0 9px; border-right: 1px solid #ddd; }
.cell:first-child{ padding-left: 6px; }
.plain{ border: 0; }
.cell wps-icon{ width: 16px; height: 16px; }
.views{ display: flex; margin-left: auto; padding-right: 7px; border-right: 1px solid #ddd; }
.zoom{ display: flex; align-items: center; gap: 4px; padding: 0 8px 0 12px; }
input{ appearance: none; width: 130px; height: 14px; margin: 0 12px; background: linear-gradient(#777, #777) 0 50%/55% 1px no-repeat, linear-gradient(#bbb, #bbb) 0 50%/100% 1px no-repeat; }
input::-webkit-slider-thumb{ appearance: none; width: 12px; height: 12px; border: 1px solid #555; border-radius: 50%; background: #f3f3f3; }
.fit{ margin-left: 8px; }
</style>
<span class="cell">Page Num: 33</span><span class="cell">Page: 33/288</span><span class="cell plain">Section: 3/8</span><span class="cell plain">SetValue: 1in</span><span class="cell plain">Row: 1</span><span class="cell plain">Column: 1</span><span class="cell">Words: 58052</span><button type="button" class="cell"><wps-icon name="spell"></wps-icon>Spell Check</button><span class="cell">Compatibility Mode</span>
<div class="views"><tool-button icon="full"></tool-button><tool-button icon="book"></tool-button><tool-button icon="page" on></tool-button><tool-button icon="outline"></tool-button><tool-button icon="globe"></tool-button><tool-button icon="eye"></tool-button></div>
<button type="button" class="zoom"><span>140%</span><drop-caret></drop-caret></button>
<button type="button" aria-label="Zoom out"><wps-icon name="minus"></wps-icon></button>
<input type="range" min="0" max="100" value="55" aria-label="Zoom">
<button type="button" aria-label="Zoom in"><wps-icon name="plus"></wps-icon></button>
<button type="button" class="fit" aria-label="Fit"><wps-icon name="fit"></wps-icon></button>`);

define("desktop-shell", `
<style>
:host{ display: grid; grid-template: auto 1fr / 68px 1fr; height: 100vh; overflow: hidden; }
top-bar{ grid-column: 1 / 3; }
term-backdrop, app-dock{ grid-area: 2 / 1; min-width: 0; min-height: 0; }
app-dock{ z-index: 1; }
main{ display: flex; flex-direction: column; min-width: 0; min-height: 0; background: #f3f3f3; }
.work{ flex: 1; display: flex; min-height: 0; }
</style>
<top-bar></top-bar>
<term-backdrop></term-backdrop>
<app-dock></app-dock>
<main>
  <tab-strip></tab-strip>
  <menu-row></menu-row>
  <wps-ribbon></wps-ribbon>
  <div class="work"><side-strip></side-strip><outline-panel></outline-panel><doc-canvas></doc-canvas></div>
  <status-bar></status-bar>
</main>`);
</script>
</body>
</html>
